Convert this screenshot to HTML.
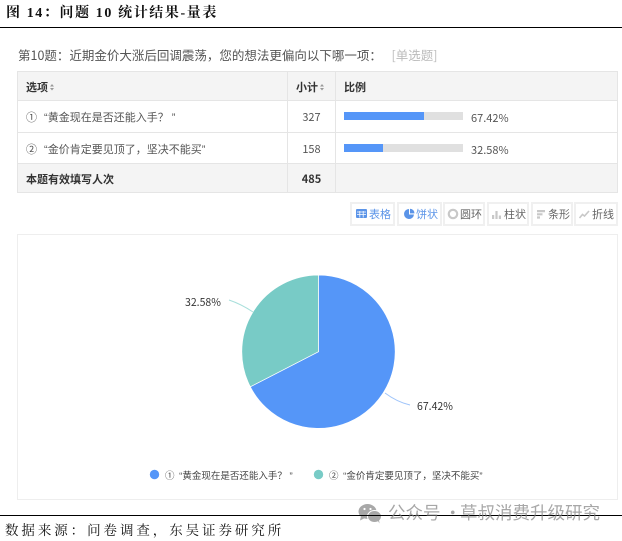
<!DOCTYPE html>
<html lang="zh">
<head>
<meta charset="utf-8">
<style>
html,body{margin:0;padding:0;background:#fff}
body{width:622px;height:539px;position:relative;overflow:hidden;font-family:"Liberation Sans","Noto Sans CJK SC",sans-serif;color:#555}
.a{position:absolute;white-space:nowrap}
.n{font-family:"Noto Sans CJK SC",sans-serif}
.serif{font-family:"Liberation Serif","Noto Serif CJK SC",serif;color:#111}
.cell{position:absolute;box-sizing:border-box;border:1px solid #e5e5e5;font-size:11px;line-height:16px}
.gray{background:#f4f4f4}
.b{font-weight:bold;color:#333;font-family:"Noto Sans CJK SC",sans-serif}
.btn{position:absolute;top:202px;height:24px;box-sizing:border-box;border:2px solid #f0f0f0;background:#fff;font-size:11px;line-height:21px;color:#666;white-space:nowrap;font-family:"Noto Sans CJK SC",sans-serif}
.btn svg{position:absolute;top:4px}
.on{color:#5b94e8}
</style>
</head>
<body>
<div class="a serif" style="left:6px;top:2px;font-size:14px;font-weight:bold;line-height:20px;letter-spacing:1.6px;transform:translateY(2px)">图 14：问题 10 统计结果-量表</div>
<div class="a" style="left:0;top:27px;width:622px;height:1px;background:#000"></div>

<div class="a" style="left:18px;top:46px;font-size:12.5px;line-height:18px;color:#555"><span class="n">第10题：近期金价大涨后回调震荡，您的想法更偏向以下哪一项：</span><span class="n" style="color:#bbb;position:absolute;left:373.500px;top:0">[单选题]</span></div>

<div class="cell gray b" style="left:17px;top:71px;width:271px;height:30px;padding:7px 0 0 8px">选项</div>
<div class="cell gray b" style="left:287px;top:71px;width:49px;height:30px;padding:7px 0 0 8px">小计</div>
<div class="cell gray b" style="left:335px;top:71px;width:283px;height:30px;padding:7px 0 0 8px">比例</div>
<svg class="a" style="left:0;top:0" width="622" height="200" viewBox="0 0 622 200"><path d="M50 86.500l2-2.500 2 2.500zM50 88l2 2.500 2-2.500zM320 86.500l2-2.500 2 2.500zM320 88l2 2.500 2-2.500z" fill="#999"/></svg>

<div class="cell" style="left:17px;top:100px;width:271px;height:33px;padding:8px 0 0 8px"><span class="n" style="margin-right:4px">①</span> “<span class="n">黄金现在是否还能入手？</span> ”</div>
<div class="cell" style="left:287px;top:100px;width:49px;height:33px;padding:8px 0 0 0;text-align:center"><span class="n">327</span></div>
<div class="cell" style="left:335px;top:100px;width:283px;height:33px"></div>
<div class="a" style="left:344px;top:112px;width:119px;height:8px;background:#e0e0e0"></div>
<div class="a" style="left:344px;top:112px;width:80px;height:8px;background:#5596f8"></div>
<div class="a n" style="left:471px;top:110px;font-size:11px;line-height:16px">67.42%</div>

<div class="cell" style="left:17px;top:132px;width:271px;height:32px;padding:8px 0 0 8px"><span class="n" style="margin-right:4px">②</span> “<span class="n">金价肯定要见顶了，坚决不能买</span>”</div>
<div class="cell" style="left:287px;top:132px;width:49px;height:32px;padding:8px 0 0 0;text-align:center"><span class="n">158</span></div>
<div class="cell" style="left:335px;top:132px;width:283px;height:32px"></div>
<div class="a" style="left:344px;top:144px;width:119px;height:8px;background:#e0e0e0"></div>
<div class="a" style="left:344px;top:144px;width:39px;height:8px;background:#5596f8"></div>
<div class="a n" style="left:471px;top:142px;font-size:11px;line-height:16px">32.58%</div>

<div class="cell gray b" style="left:17px;top:163px;width:271px;height:30px;padding:7px 0 0 8px">本题有效填写人次</div>
<div class="cell gray b" style="left:287px;top:163px;width:49px;height:30px;padding:7px 0 0 0;text-align:center">485</div>
<div class="cell gray" style="left:335px;top:163px;width:283px;height:30px"></div>

<div class="btn on" style="left:350px;width:45px;padding-left:17px"><svg style="left:4px" width="12" height="12" viewBox="0 0 12 12"><rect x="0" y="1" width="11" height="9" rx="1" fill="#5b94e8"/><path d="M1 4h9M1 6.500h9M3.800 3v6.500M7.200 3v6.500" stroke="#fff" stroke-width=".8"/></svg>表格</div>
<div class="btn on" style="left:397px;width:45px;padding-left:17px"><svg style="left:5px" width="12" height="12" viewBox="0 0 12 12"><path d="M5 1a5 5 0 1 0 5 5.500H5z" fill="#5b94e8"/><path d="M6 .8a4.500 4.500 0 0 1 4.500 4.600H6z" fill="#5b94e8"/></svg>饼状</div>
<div class="btn" style="left:443px;width:42px;padding-left:15px"><svg style="left:2px" width="12" height="12" viewBox="0 0 12 12"><circle cx="6" cy="6" r="4.200" fill="none" stroke="#c8c8c8" stroke-width="2.200"/></svg>圆环</div>
<div class="btn" style="left:487px;width:42px;padding-left:15px"><svg style="left:3px" width="12" height="12" viewBox="0 0 12 12"><path d="M0 7h2.200v4H0zM3.400 3h2.200v8H3.400zM6.800 7.500H9V11H6.800z" fill="#c8c8c8"/></svg>柱状</div>
<div class="btn" style="left:531px;width:42px;padding-left:15px"><svg style="left:4px" width="12" height="12" viewBox="0 0 12 12"><path d="M0 2h8v2.200H0zM0 5.200h5.500v2.200H0zM0 8.400h3v2.200H0z" fill="#c8c8c8"/></svg>条形</div>
<div class="btn" style="left:574px;width:44px;padding-left:16px"><svg style="left:3px" width="12" height="12" viewBox="0 0 12 12"><path d="M.5 10l3-3.500 2 1.500L10 3" fill="none" stroke="#c8c8c8" stroke-width="1.600"/></svg>折线</div>

<div class="a" style="left:17px;top:234px;width:601px;height:266px;box-sizing:border-box;border:1px solid #eee"></div>
<svg class="a" style="left:0;top:0" width="622" height="539" viewBox="0 0 622 539">
<path d="M318.500 351.700V275A76.700 76.700 0 1 1 250.300 386.800Z" fill="#5596f8" stroke="#fff" stroke-width=".7"/>
<path d="M318.500 351.700L250.300 386.800A76.700 76.700 0 0 1 318.500 275Z" fill="#78cbc6" stroke="#fff" stroke-width=".7"/>
<path d="M385 393Q397 402 410 405" fill="none" stroke="#9fc4fa" stroke-width="1"/>
<path d="M253 312Q241 304 229 300" fill="none" stroke="#a8dfdb" stroke-width="1"/>
<circle cx="154.500" cy="474.500" r="4.700" fill="#5596f8"/>
<circle cx="318.500" cy="474.500" r="4.700" fill="#78cbc6"/>
<g fill="#a8a8a8">
<ellipse cx="367.500" cy="511.500" rx="9" ry="7.500"/>
<path d="M361 516l-1 4.500 5-2.500z"/>
<ellipse cx="374.500" cy="516.500" rx="7" ry="6" stroke="#fff" stroke-width="1"/>
<path d="M378 521l1.500 2.500-.5-3.500z"/>
<circle cx="364.500" cy="509" r="1.100" fill="#fff"/>
<circle cx="370.500" cy="509" r="1.100" fill="#fff"/>
</g>
</svg>
<div class="a n" style="left:185px;top:295px;font-size:10.500px;line-height:16px;color:#333">32.58%</div>
<div class="a n" style="left:417px;top:399px;font-size:10.500px;line-height:16px;color:#333">67.42%</div>
<div class="a" style="left:165px;top:467px;font-size:9.500px;line-height:16px;color:#444"><span class="n" style="margin-right:2px">①</span> “<span class="n">黄金现在是否还能入手？</span> ”</div>
<div class="a" style="left:329px;top:467px;font-size:9.500px;line-height:16px;color:#444"><span class="n" style="margin-right:2px">②</span> “<span class="n">金价肯定要见顶了，坚决不能买</span>”</div>

<div class="a" style="left:0;top:515px;width:622px;height:1px;background:#000"></div>
<div class="a n" style="left:388px;top:502px;font-size:17.500px;line-height:22px;color:rgba(130,130,130,.7)">公众号<span style="position:absolute;left:56px;top:0">·</span><span style="position:absolute;left:72px;top:0">草叔消费升级研究</span></div>
<div class="a serif" style="left:5px;top:521px;font-size:13.500px;line-height:20px;letter-spacing:2.920px">数据来源：问卷调查，东吴证券研究所</div>
</body>
</html>
